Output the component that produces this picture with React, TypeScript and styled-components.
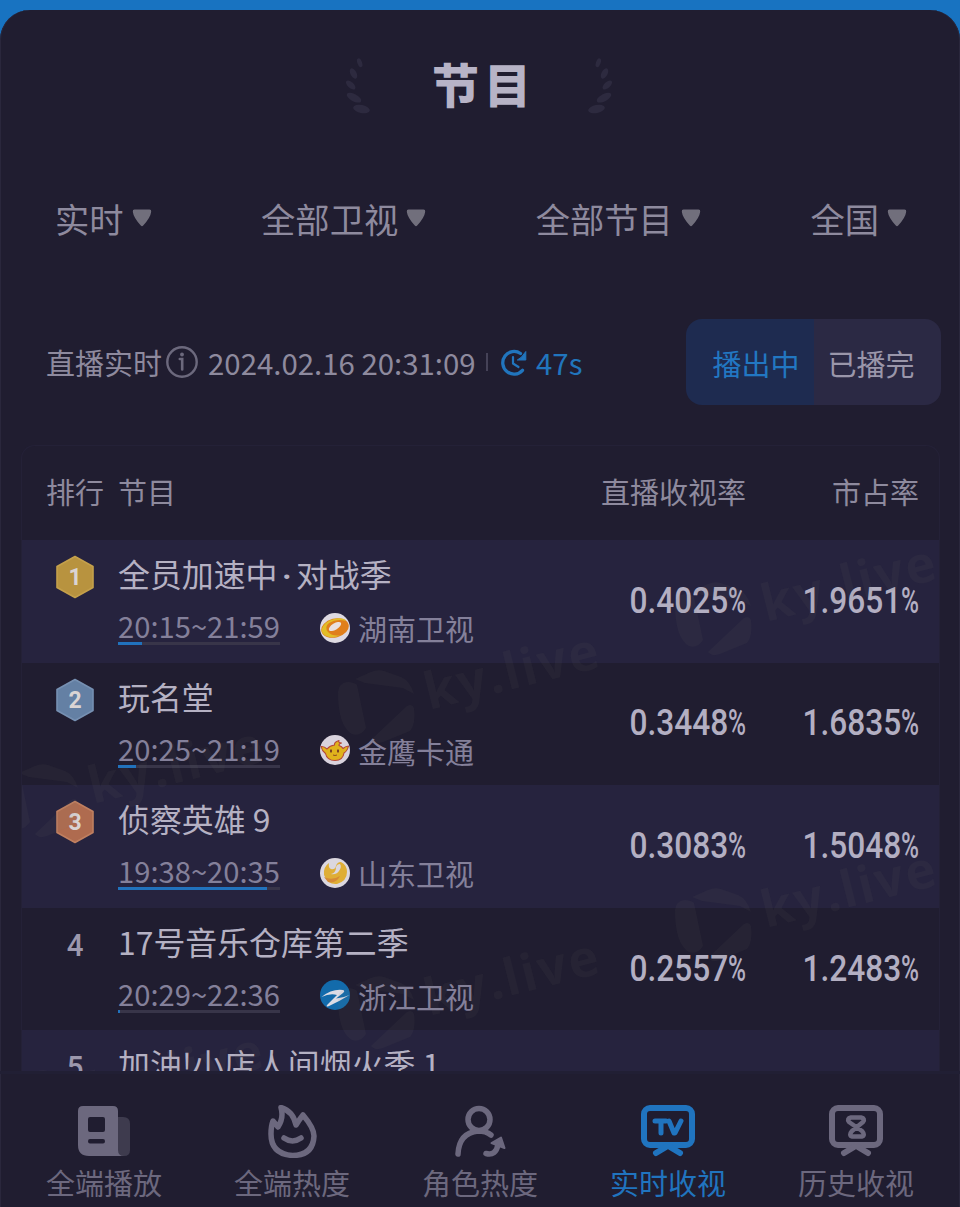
import React from 'react';
import styled, { createGlobalStyle } from 'styled-components';

const GlobalStyle = createGlobalStyle`
  * { box-sizing: border-box; }
  html, body { margin: 0; padding: 0; background: #1873c1; }
  body { font-family: "Noto Sans CJK SC", "Noto Sans", sans-serif; }
`;

const Screen = styled.div`
  width: 960px;
  height: 1207px;
  padding-top: 10px;
  background: #1873c1;
  overflow: hidden;
`;

const Sheet = styled.main`
  height: 1197px;
  display: flex;
  flex-direction: column;
  background: #201d30;
  border-radius: 30px 30px 0 0;
  box-shadow: inset 1px 0 #2a273c, inset -1px 0 #2a273c;
  overflow: hidden;
`;

const Header = styled.header`
  height: 150px;
  flex: none;
  display: flex;
  justify-content: center;
  align-items: center;
  gap: 56px;
`;

const Title = styled.h1`
  margin: -5px 0 0;
  width: 100px;
  text-align: center;
  font-size: 47px;
  line-height: 60px;
  font-weight: 900;
  letter-spacing: 5px;
  text-indent: 2px;
  color: #b7b3c6;
  white-space: nowrap;
`;

const Filters = styled.nav`
  height: 118px;
  flex: none;
  padding: 0 53px 3px 55px;
  display: flex;
  align-items: center;
  justify-content: space-between;
`;

const Filter = styled.div`
  display: flex;
  align-items: center;
  gap: 8px;
  font-size: 34.3px;
  line-height: 44px;
  color: #8e8a9e;
`;

const Status = styled.section`
  height: 167px;
  flex: none;
  padding: 0 19px 0 46px;
  display: flex;
  align-items: center;
  color: #8e8a9e;
  font-size: 29px;
  line-height: 40px;
  white-space: nowrap;
`;

const Stamp = styled.span`
  margin-left: 9px;
  width: 268px;
  font-size: 29.4px;
`;

const Divider = styled.i`
  width: 2px;
  height: 18px;
  margin: 0 12px 0 10px;
  background: #454257;
`;

const Countdown = styled.span`
  margin-left: 8px;
  font-size: 29.4px;
  color: #2175bd;
`;

const Toggle = styled.div`
  margin-left: auto;
  width: 255px;
  height: 86px;
  display: flex;
  border-radius: 16px;
  overflow: hidden;
`;

const ToggleItem = styled.span<{ $active?: boolean }>`
  flex: 1;
  display: flex;
  align-items: center;
  justify-content: ${(p) => (p.$active ? 'flex-end' : 'flex-start')};
  padding: 2px 14px 0;
  color: ${(p) => (p.$active ? '#2277c2' : '#9a96aa')};
  background: ${(p) => (p.$active ? '#1e2b50' : '#2b2944')};
`;

const Table = styled.section`
  position: relative;
  height: 626px;
  flex: none;
  margin: 0 20px 0 21px;
  border: 1px solid #242137;
  border-bottom: 0;
  border-radius: 14px 14px 0 0;
  overflow: hidden;
`;

const Columns = styled.div`
  display: grid;
  grid-template-columns: 96px 1fr 200px 173px;
  padding-right: 20px;
`;

const HeadRow = styled(Columns)`
  height: 94px;
  padding-bottom: 4px;
  align-items: center;
  font-size: 29px;
  line-height: 40px;
  color: #8e8a9e;
`;

const HeadCell = styled.span<{ $align?: string; $indent?: number }>`
  text-align: ${(p) => p.$align ?? 'left'};
  padding-left: ${(p) => p.$indent ?? 0}px;
  white-space: nowrap;
`;

const Row = styled(Columns)<{ $tinted: boolean }>`
  height: 122.6px;
  background: ${(p) => (p.$tinted ? '#26233e' : 'transparent')};
`;

const RankCell = styled.div`
  width: 40px;
  height: 44px;
  margin: 15px 0 0 33px;
  display: flex;
  align-items: center;
  justify-content: center;
  font-family: Roboto, sans-serif;
  font-size: 32px;
  font-weight: 500;
  color: #9c98ad;
`;

const RankDigit = styled.span`
  transform: scaleX(0.92);
`;

const Program = styled.div`
  padding-top: 11px;
  display: flex;
  flex-direction: column;
`;

const Name = styled.div`
  height: 44px;
  font-size: 31.9px;
  line-height: 44px;
  color: #b5b1c3;
  white-space: pre;
`;

const Dot = styled.span`
  display: inline-block;
  width: 18.5px;
  line-height: 30px;
  text-align: center;
  font-family: Roboto, sans-serif;
  font-weight: 700;
`;

const Meta = styled.div`
  margin-top: 11px;
  display: flex;
  align-items: flex-start;
  color: #84809a;
  line-height: 40px;
`;

const Slot = styled.div`
  width: 162px;
  font-size: 29.2px;
  line-height: 38px;
  white-space: nowrap;
`;

const Track = styled.div`
  height: 3px;
  margin-top: -2px;
  background: #383549;
`;

const Elapsed = styled.div`
  height: 3px;
  background: #2172bd;
`;

const Channel = styled.div`
  margin: 2px 0 0 40px;
  display: flex;
  align-items: center;
  gap: 8px;
  font-size: 29px;
  white-space: nowrap;
`;

const Figure = styled.div`
  align-self: center;
  padding-bottom: 1px;
  display: flex;
  justify-content: flex-end;
  font-family: Roboto, sans-serif;
  font-size: 36px;
  line-height: 44px;
  font-weight: 500;
  color: #b3afc2;
`;

const Digits = styled.span`
  transform: scaleX(0.88);
  transform-origin: right;
`;

const Percent = styled.span`
  width: 18px;
  font-weight: 500;
  transform: scaleX(0.68);
  transform-origin: left;
`;

const Watermarks = styled.svg`
  position: absolute;
  left: -1px;
  top: 0;
  pointer-events: none;
`;

const TabBar = styled.nav`
  flex: 1;
  padding: 31px 10px 0;
  display: grid;
  grid-template-columns: repeat(5, 188px);
  align-items: start;
  border-top: 3px solid #211f34;
`;

const Tab = styled.div<{ $active?: boolean }>`
  display: flex;
  flex-direction: column;
  align-items: center;
  gap: 4px;
  font-size: 29px;
  line-height: 40px;
  color: ${(p) => (p.$active ? '#2074bf' : '#6c687e')};
`;

const leaves = [
  [15.7, 7.7, 2.3, 4.6, -20],
  [9.5, 18.5, 3, 5.6, -28],
  [6.7, 30, 3, 5.8, -48],
  [10, 42.7, 3.6, 8, -62],
  [17.5, 54, 4, 8.5, -78],
];

const Laurel = ({ flip }: { flip?: boolean }) => (
  <svg width="30" height="60" viewBox="0 0 30 60">
    <g fill="#2d2a3f" transform={flip ? 'translate(28 0) scale(-1 1)' : undefined}>
      {leaves.map(([x, y, rx, ry, a]) => (
        <ellipse key={y} cx={x} cy={y} rx={rx} ry={ry} transform={`rotate(${a} ${x} ${y})`} />
      ))}
    </g>
  </svg>
);

const Caret = () => (
  <svg width="20" height="19" viewBox="0 0 20 19">
    <path d="M2.500 1.500h15q2 0 1.700 2.200Q18.500 9.500 11.200 17.500q-1.200 1.400-2.400 0Q1.500 9.500 .8 3.700 .5 1.500 2.500 1.500z" fill="#716f7c" />
  </svg>
);

const InfoIcon = () => (
  <svg width="34" height="34" viewBox="0 0 34 34" style={{ marginLeft: 3 }}>
    <circle cx="17" cy="17" r="14.700" fill="none" stroke="#6c697d" strokeWidth="2.400" />
    <circle cx="17" cy="9.500" r="1.900" fill="#6c697d" />
    <path d="M14.800 14h2.400v10.500" fill="none" stroke="#6c697d" strokeWidth="2.600" strokeLinecap="round" />
  </svg>
);

const TimerIcon = () => (
  <svg width="28" height="28" viewBox="0 0 28 28" fill="none" stroke="#2175bd" strokeWidth="3.300">
    <path d="M22.500 22.300A11.300 11.300 0 1 1 20.500 5.500" strokeLinecap="round" />
    <path d="M13 9v6.500l5.500 3.500" strokeWidth="2.200" strokeLinecap="round" strokeLinejoin="round" />
    <path d="M25.800 3.500v8.500h-8.500q4-1.500 8.500-8.500z" fill="#2175bd" stroke="#2175bd" strokeWidth="1" />
  </svg>
);

const medalTones: Record<number, [string, string]> = {
  1: ['#b8933f', '#c4a04b'],
  2: ['#6480a4', '#7690b2'],
  3: ['#af6b4f', '#bf7f60'],
};

const Medal = ({ rank }: { rank: number }) => {
  const [base, edge] = medalTones[rank];
  return (
    <svg width="40" height="44" viewBox="0 0 40 44">
      <path d="M20 1.500 38 11.500v21L20 42.500 2 32.500v-21z" fill={base} stroke={edge} strokeWidth="1.600" strokeLinejoin="round" />
      <text x="20" y="29.800" textAnchor="middle" fontFamily="Roboto, sans-serif" fontSize="23" fontWeight="700" fill="#dad4d4">
        {rank}
      </text>
    </svg>
  );
};

const logos: Record<string, React.ReactNode> = {
  hunan: (
    <>
      <circle cx="15" cy="15" r="15" fill="#dedae2" />
      <ellipse cx="15" cy="15" rx="14" ry="9.500" transform="rotate(-14 15 15)" fill="#e07f1b" />
      <path d="M1.500 17Q3 9 14 6q10-2 12 2-9-3-17 2-5 4-1 9 5 5 13 3-8 4-15 1-4-2-4.500-6z" fill="#e2bd27" />
      <ellipse cx="15" cy="13.500" rx="7" ry="3.200" transform="rotate(-32 15 13.500)" fill="#e9e1e0" />
    </>
  ),
  jinying: (
    <>
      <circle cx="15" cy="15" r="15" fill="#d9d3dd" />
      <path d="M1 11.500q3-.5 6 2.500 3-3.500 7.500-4Q14 7 19 5.500q-1 2.500 2.500 2.500-3 1-2.500 2.500 3 1 4 3 2-2 5.500-2.500-1 5-4.500 7-1 7.500-9 7.500T5.500 18.500Q2 16 1 11.500z" fill="#e0b31c" stroke="#b4473a" strokeWidth="1.100" strokeLinejoin="round" />
      <ellipse cx="11" cy="16" rx="1" ry="1.700" fill="#713623" />
      <ellipse cx="18" cy="16" rx="1" ry="1.700" fill="#713623" />
      <path d="M13 20q2 1 4 0" stroke="#8f4822" fill="none" />
    </>
  ),
  shandong: (
    <>
      <circle cx="15" cy="15" r="15" fill="#dbd7df" />
      <path d="M4 17Q3 9 9 5q-1 5 2 6 4 1 5-3 1-4 5-4 6 3 6 10 0 9-10 12-9 1-13-9zM16 9q0 6-5 7 5 1 8-3t1-7q-3 0-4 3z" fill="#dfae35" fillRule="evenodd" />
      <path d="M4 19q8 4 16-1-4 8-12 6z" fill="#d58a35" />
    </>
  ),
  zhejiang: (
    <>
      <circle cx="15" cy="15" r="15" fill="#136bab" />
      <path d="M1.500 17Q12 8.500 23 10q2.500 1 0 3l-7 5.500q7-.5 13.500-3.500Q20 21 8 26.500q-2.500 0-.5-2L17 15Q10 13 1.500 17z" fill="#dcdce5" />
    </>
  ),
};

const ChannelLogo = ({ id }: { id: string }) => (
  <svg width="30" height="30" viewBox="0 0 30 30" style={{ marginTop: -1 }}>
    {logos[id]}
  </svg>
);

const rows = [
  { rank: 1, name: ['全员加速中', '对战季'], time: '20:15~21:59', done: 15, logo: 'hunan', channel: '湖南卫视', rate: '0.4025', share: '1.9651' },
  { rank: 2, name: ['玩名堂'], time: '20:25~21:19', done: 11, logo: 'jinying', channel: '金鹰卡通', rate: '0.3448', share: '1.6835' },
  { rank: 3, name: ['侦察英雄 9'], time: '19:38~20:35', done: 92, logo: 'shandong', channel: '山东卫视', rate: '0.3083', share: '1.5048' },
  { rank: 4, name: ['17号音乐仓库第二季'], time: '20:29~22:36', done: 1.3, logo: 'zhejiang', channel: '浙江卫视', rate: '0.2557', share: '1.2483' },
  { rank: 5, name: ['加油!小店人间烟火季 1'] },
];

const marks = [
  [18, 352], [354, 258], [691, 170],
  [18, 658], [354, 564], [691, 476],
];

const Mark = ({ x, y }: { x: number; y: number }) => (
  <g transform={`translate(${x} ${y})`} fill="#7f7c70" fillOpacity="0.075">
    <path d="M-37-12q1-9 9-10 7 0 10 3l9 43q-6 9-14 6-14-8-14-42z" />
    <path d="M-20-25-4-32q6-3 13-1l17 6q9 4 13 17l-11-6-38-5z" />
    <path d="M-4 36 32 2q5-3 7 2 2 16-4 23L8 38q-8 3-12-2z" />
    <text x="54" y="6" transform="rotate(-14 54 6)" fontFamily='"Open Sans", sans-serif' fontWeight="700" fontSize="51" textLength="178">
      ky.live
    </text>
  </g>
);

const tvFrame = (
  <>
    <rect x="3" y="3" width="48" height="37" rx="6" strokeWidth="6" />
    <path d="m25 42-10 6M29 42l10 6" strokeWidth="6" />
  </>
);

const tabs = [
  {
    label: '全端播放',
    icon: (
      <g stroke="none" fill="currentColor">
        <path d="M41 12h5q7 0 7 7v26q0 6-6 6h-9z" opacity=".4" />
        <path fillRule="evenodd" d="M6 1h30q5 0 5 5v39q0 6 6 6H12Q1 51 1 40V6q0-5 5-5zM13 12q-2 0-2 2v11q0 2 2 2h13q2 0 2-2V14q0-2-2-2zM13 34q-2 0-2 2.300t2 2.300h13q2 0 2-2.300T26 34z" />
      </g>
    ),
  },
  {
    label: '全端热度',
    icon: (
      <>
        <path d="M8 16 13 22Q19 13 16 2.500 28 6 31 20 34 15 38 10 49 23 49 31 48 50.500 27.500 50.500 6 49 6 29 6 21 8 16Z" strokeWidth="5.500" />
        <path d="M19 33q8.500 6 17 0" strokeWidth="5.500" />
      </>
    ),
  },
  {
    label: '角色热度',
    icon: (
      <>
        <circle cx="26" cy="14.500" r="11" strokeWidth="5.500" />
        <path d="M5 49Q6 28 25 26q8 0 13 4M33 48.500q10 2.500 12-9" strokeWidth="5.500" />
        <path d="M38.500 38 48 32.500 51.500 43z" fill="currentColor" strokeWidth="2" />
      </>
    ),
  },
  {
    label: '实时收视',
    active: true,
    icon: (
      <>
        {tvFrame}
        <path d="M14 16h11M20 16v12M28 16l5 12h1l6-12" strokeWidth="5" />
      </>
    ),
  },
  {
    label: '历史收视',
    icon: (
      <>
        {tvFrame}
        <path d="M22 12.500h10q4.500 1 2 4.500l-11 9q-3.500 4 0 5.500h10q3.500-1.500 0-5.500l-13-9q-2.500-3.500 2-4.500z" strokeWidth="4.500" />
      </>
    ),
  },
];

const TabIcon = ({ children }: { children: React.ReactNode }) => (
  <svg width="54" height="53" viewBox="0 0 54 53" fill="none" stroke="currentColor" strokeLinecap="round" strokeLinejoin="round">
    {children}
  </svg>
);

const Value = ({ value }: { value: string }) => (
  <Figure>
    <Digits>{value}</Digits>
    <Percent>%</Percent>
  </Figure>
);

export default function App() {
  return (
    <Screen>
      <GlobalStyle />
      <Sheet>
        <Header>
          <Laurel />
          <Title>节目</Title>
          <Laurel flip />
        </Header>
        <Filters>
          {['实时', '全部卫视', '全部节目', '全国'].map((label) => (
            <Filter key={label}>
              {label}
              <Caret />
            </Filter>
          ))}
        </Filters>
        <Status>
          直播实时
          <InfoIcon />
          <Stamp>2024.02.16 20:31:09</Stamp>
          <Divider />
          <TimerIcon />
          <Countdown>47s</Countdown>
          <Toggle>
            <ToggleItem $active>播出中</ToggleItem>
            <ToggleItem>已播完</ToggleItem>
          </Toggle>
        </Status>
        <Table>
          <HeadRow>
            <HeadCell $indent={24}>排行</HeadCell>
            <HeadCell>节目</HeadCell>
            <HeadCell $align="right">直播收视率</HeadCell>
            <HeadCell $align="right">市占率</HeadCell>
          </HeadRow>
          {rows.map((row, i) => (
            <Row key={row.rank} $tinted={i % 2 === 0}>
              <RankCell>{row.rank <= 3 ? <Medal rank={row.rank} /> : <RankDigit>{row.rank}</RankDigit>}</RankCell>
              <Program>
                <Name>
                  {row.name[0]}
                  {row.name[1] && <Dot>·</Dot>}
                  {row.name[1]}
                </Name>
                {row.time && (
                  <Meta>
                    <Slot>
                      {row.time}
                      <Track>
                        <Elapsed style={{ width: `${row.done}%` }} />
                      </Track>
                    </Slot>
                    <Channel>
                      <ChannelLogo id={row.logo} />
                      {row.channel}
                    </Channel>
                  </Meta>
                )}
              </Program>
              {row.rate && <Value value={row.rate} />}
              {row.share && <Value value={row.share} />}
            </Row>
          ))}
          <Watermarks width="920" height="626" viewBox="0 0 920 626">
            {marks.map(([x, y]) => (
              <Mark key={`${x}-${y}`} x={x} y={y} />
            ))}
          </Watermarks>
        </Table>
        <TabBar>
          {tabs.map((tab) => (
            <Tab key={tab.label} $active={tab.active}>
              <TabIcon>{tab.icon}</TabIcon>
              {tab.label}
            </Tab>
          ))}
        </TabBar>
      </Sheet>
    </Screen>
  );
}
